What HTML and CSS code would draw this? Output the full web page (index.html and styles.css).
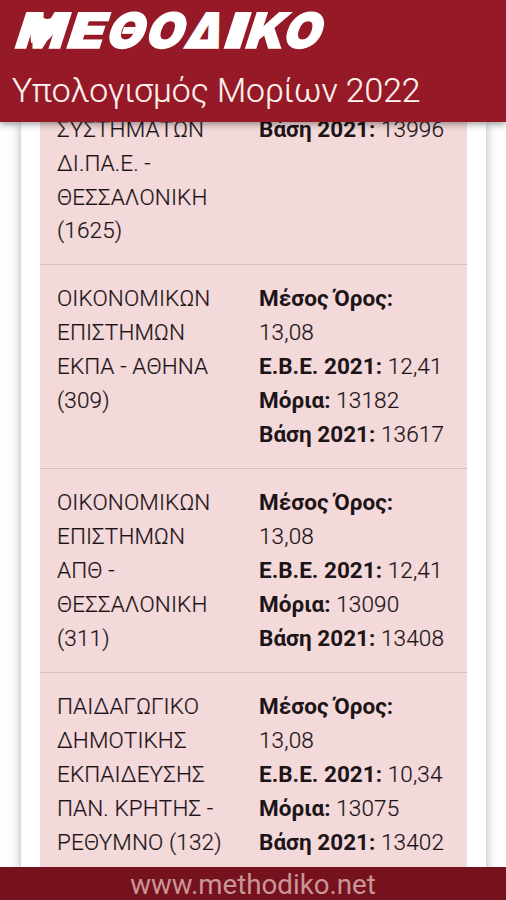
FILE: index.html
```html
<!DOCTYPE html>
<html lang="el">
<head>
<meta charset="utf-8">
<title>Υπολογισμός Μορίων 2022</title>
<link rel="stylesheet" href="styles.css">
</head>
<body>
<div class="app">
  <header class="header">
    <svg class="logo" viewBox="0 0 340 60" role="img" aria-label="ΜΕΘΟΔΙΚΟ">
      <text class="logo-text" transform="translate(0 48.2) skewX(-18)"><tspan x="13" textLength="49" lengthAdjust="spacingAndGlyphs">Μ</tspan><tspan x="64.5" textLength="37" lengthAdjust="spacingAndGlyphs">Ε</tspan><tspan x="104" textLength="37" lengthAdjust="spacingAndGlyphs">Θ</tspan><tspan x="143.5" textLength="37" lengthAdjust="spacingAndGlyphs">Ο</tspan><tspan x="183" textLength="36" lengthAdjust="spacingAndGlyphs">Δ</tspan><tspan x="221.5" textLength="21" lengthAdjust="spacingAndGlyphs">Ι</tspan><tspan x="243.5" textLength="38" lengthAdjust="spacingAndGlyphs">Κ</tspan><tspan x="281" textLength="37" lengthAdjust="spacingAndGlyphs">Ο</tspan></text>
      <path class="logo-fill" d="M38 12Q41 18 47 19Q54 19 61 12L58 28L51 37Q43 46 37 40L31 43L30 24Z"/>
    </svg>
    <h1 class="title">Υπολογισμός Μορίων 2022</h1>
  </header>
  <main class="content">
    <div class="card">
      <div class="row first">
        <div class="school">ΣΥΣΤΗΜΑΤΩΝ<br>ΔΙ.ΠΑ.Ε. -<br>ΘΕΣΣΑΛΟΝΙΚΗ<br>(1625)</div>
        <div class="data"><b>Βάση 2021:</b> 13996</div>
      </div>
      <div class="row">
        <div class="school">ΟΙΚΟΝΟΜΙΚΩΝ<br>ΕΠΙΣΤΗΜΩΝ<br>ΕΚΠΑ - ΑΘΗΝΑ<br>(309)</div>
        <div class="data"><b>Μέσος Όρος:</b><br>13,08<br><b>Ε.Β.Ε. 2021:</b> 12,41<br><b>Μόρια:</b> 13182<br><b>Βάση 2021:</b> 13617</div>
      </div>
      <div class="row">
        <div class="school">ΟΙΚΟΝΟΜΙΚΩΝ<br>ΕΠΙΣΤΗΜΩΝ<br>ΑΠΘ -<br>ΘΕΣΣΑΛΟΝΙΚΗ<br>(311)</div>
        <div class="data"><b>Μέσος Όρος:</b><br>13,08<br><b>Ε.Β.Ε. 2021:</b> 12,41<br><b>Μόρια:</b> 13090<br><b>Βάση 2021:</b> 13408</div>
      </div>
      <div class="row">
        <div class="school">ΠΑΙΔΑΓΩΓΙΚΟ<br>ΔΗΜΟΤΙΚΗΣ<br>ΕΚΠΑΙΔΕΥΣΗΣ<br>ΠΑΝ. ΚΡΗΤΗΣ -<br>ΡΕΘΥΜΝΟ (132)</div>
        <div class="data"><b>Μέσος Όρος:</b><br>13,08<br><b>Ε.Β.Ε. 2021:</b> 10,34<br><b>Μόρια:</b> 13075<br><b>Βάση 2021:</b> 13402</div>
      </div>
    </div>
  </main>
  <footer class="footer"><span class="site">www.methodiko.net</span></footer>
</div>
</body>
</html>
```
FILE: styles.css
```css
* { box-sizing: border-box; }
body { margin: 0; font-family: Roboto, "Liberation Sans", sans-serif; }
.app {
  width: 506px;
  height: 900px;
  display: flex;
  flex-direction: column;
  overflow: hidden;
  background: #fdfdfd;
}
.header {
  flex: 0 0 122px;
  position: relative;
  z-index: 1;
  background: #951926;
  box-shadow: 0 2px 7px rgba(0, 0, 0, .4);
}
.logo { display: block; width: 340px; height: 60px; overflow: visible; }
.logo-text {
  font-family: Inter, Roboto, sans-serif;
  font-weight: 900;
  font-size: 48.5px;
  fill: #fff;
  stroke: #fff;
  stroke-width: 1.4;
}
.logo-fill { fill: #fff; }
.title {
  margin: 0;
  padding-left: 12px;
  font-weight: 300;
  font-size: 33.7px;
  line-height: 61px;
  white-space: nowrap;
  color: #fff3ef;
  -webkit-text-stroke: .2px #fff3ef;
}
.content { flex: 1; min-height: 0; overflow: hidden; padding: 0 20px 0 21px; }
.card {
  padding: 0 19px;
  background: #fff;
  box-shadow: 0 0 9px rgba(0, 0, 0, .3);
}
.row {
  display: grid;
  grid-template-columns: 202px 1fr;
  height: 204px;
  padding: 17.4px 0 0 17px;
  border-bottom: 1px solid #d0bfc1;
  background: #f3d9d9;
  font-weight: 300;
  font-size: 22.5px;
  line-height: 33.8px;
  letter-spacing: .13px;
  white-space: nowrap;
  color: #1d1418;
  -webkit-text-stroke: .2px #1d1418;
}
.row.first { height: 143px; padding-top: 0; }
.row.first > div { margin-top: -9px; }
.row b { font-weight: 700; letter-spacing: .02px; -webkit-text-stroke: 0; }
.footer {
  flex: none;
  height: 33px;
  background: #76121e;
  color: #c99597;
  font-weight: 400;
  font-size: 27.7px;
  line-height: 36px;
  text-align: center;
}
```
